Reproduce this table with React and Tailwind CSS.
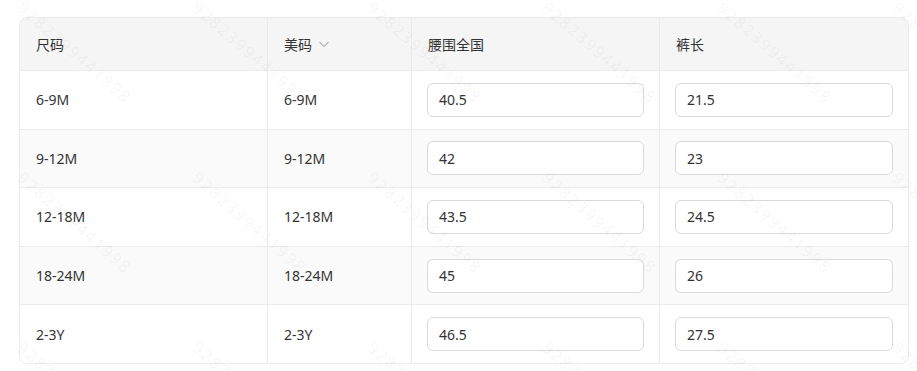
import React from "react";

const rows = [
  { size: "6-9M", us: "6-9M", waist: "40.5", length: "21.5" },
  { size: "9-12M", us: "9-12M", waist: "42", length: "23" },
  { size: "12-18M", us: "12-18M", waist: "43.5", length: "24.5" },
  { size: "18-24M", us: "18-24M", waist: "45", length: "26" },
  { size: "2-3Y", us: "2-3Y", waist: "46.5", length: "27.5" },
];

const cols = "grid grid-cols-[247px_1px_143px_1px_247px_1px_248px]";

// repeated diagonal watermark laid over the table
const Watermark = () => (
  <div className="pointer-events-none absolute left-[28px] top-[-4px] grid grid-cols-[175px_175px_175px_175px_175px_175px] grid-rows-[170px_170px_170px]">
    {Array.from({ length: 18 }).map((_, i) => (
      <div key={i} className="relative">
        <span className="absolute left-0 top-0 origin-top-left rotate-[41deg] whitespace-nowrap text-[16px] tracking-[2px] text-black/[0.05]">
          9282399441998
        </span>
      </div>
    ))}
  </div>
);

const Cell = ({ children }) => (
  <div className="flex items-center px-4 text-[14px] text-[#333]">{children}</div>
);

const Line = () => <div className="bg-[#ebebeb]" />;

const Input = ({ value }) => (
  <div className="flex items-center px-[15px]">
    <input
      type="text"
      defaultValue={value}
      className="h-[34px] w-full rounded-[6px] border border-[#d9d9d9] bg-white px-[11px] text-[14px] text-[#333] outline-none"
    />
  </div>
);

export default function App() {
  return (
    <div
      className="relative h-[371px] w-[917px] overflow-hidden bg-white pl-[19px] pt-[17px]"
      style={{ fontFamily: '"Noto Sans", "Noto Sans CJK SC", sans-serif' }}
    >
      <div className="w-[890px] overflow-hidden rounded-lg border border-[#ebebeb]">
        {/* header */}
        <div className={`${cols} h-[52px] bg-[#f5f5f5]`}>
          <Cell>尺码</Cell>
          <Line />
          <Cell>
            美码
            <svg className="ml-[6px] h-[12px] w-[12px] text-[#888]" viewBox="0 0 12 12" fill="none">
              <path d="M1.5 4l4.5 4.5L10.5 4" stroke="currentColor" strokeWidth="1" />
            </svg>
          </Cell>
          <Line />
          <Cell>腰围全国</Cell>
          <Line />
          <Cell>裤长</Cell>
        </div>

        {rows.map((r, i) => (
          <div
            key={r.size}
            className={`${cols} h-[58.6px] border-t border-[#ebebeb] ${i % 2 === 1 ? "bg-[#fafafa]" : "bg-white"}`}
          >
            <Cell>{r.size}</Cell>
            <Line />
            <Cell>{r.us}</Cell>
            <Line />
            <Input value={r.waist} />
            <Line />
            <Input value={r.length} />
          </div>
        ))}
      </div>

      <Watermark />
    </div>
  );
}
